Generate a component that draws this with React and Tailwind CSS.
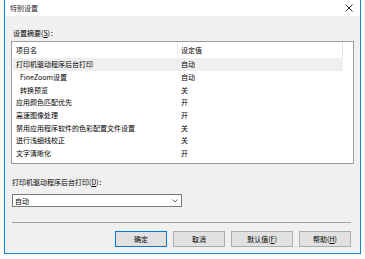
import React from "react";

const rows = [
  { name: "打印机驱动程序后台打印", value: "自动", indent: false, sel: true },
  { name: "FineZoom设置", value: "自动", indent: true },
  { name: "转换预览", value: "关", indent: true },
  { name: "应用颜色匹配优先", value: "开" },
  { name: "高速图像处理", value: "开" },
  { name: "禁用应用程序软件的色彩配置文件设置", value: "关" },
  { name: "进行浅细线校正", value: "关" },
  { name: "文字清晰化", value: "开" },
];

function Btn({ children, primary }) {
  return (
    <div
      className={
        "h-[16px] flex items-center justify-center bg-[#e1e1e1] border " +
        (primary ? "border-[#0078d7] w-[52px]" : "border-[#adadad]")
      }
    >
      {children}
    </div>
  );
}

export default function App() {
  return (
    <div
      className="w-[365px] h-[259px] bg-[#fbfbfb] text-[7px] leading-[10px] text-black overflow-hidden"
      style={{ fontFamily: '"Noto Sans CJK SC", "Noto Sans", sans-serif' }}
    >
      <div className="ml-[4px] w-[357px] h-[254px] border-x border-b border-[#1883d7] flex flex-col">
        <div className="h-[16px] bg-white flex items-center justify-between pl-[5px] pr-[6px] shrink-0">
          <span className="text-[#222]">特别设置</span>
          <svg width="8" height="8" viewBox="0 0 8 8" className="mr-[1px]">
            <path d="M0.5 0.5 L7.5 7.5 M7.5 0.5 L0.5 7.5" stroke="#111" strokeWidth="0.9" />
          </svg>
        </div>
        <div className="flex-1 bg-[#f0f0f0] px-[6px] flex flex-col">
          <div className="mt-[12px] h-[10px] ml-[2px]">
            设置摘要(<span className="underline">S</span>)：
          </div>
          <div className="mt-[3px] h-[123px] w-[343px] border border-[#9a9ca3] bg-white flex flex-col">
            <div className="h-[15px] flex shrink-0">
              <div className="w-[166px] h-full border-r border-[#e5e5e5] pl-[4px] flex items-center">项目名</div>
              <div className="w-[165px] h-full border-r border-[#e5e5e5] pl-[3px] flex items-center">设定值</div>
            </div>
            <div className="mt-[1px] flex flex-col">
              {rows.map((r, i) => (
                <div
                  key={i}
                  className={
                    "h-[12.7px] flex items-center ml-[1px] w-[330px] " + (r.sel ? "bg-[#efefef]" : "")
                  }
                >
                  <div className={"w-[165px] " + (r.indent ? "pl-[7px]" : "pl-[3px]")}>{r.name}</div>
                  <div className="pl-[3px]">{r.value}</div>
                </div>
              ))}
            </div>
          </div>
          <div className="mt-[13px] h-[10px] ml-[1px]">
            打印机驱动程序后台打印(<span className="underline">D</span>)：
          </div>
          <div className="mt-[7px] h-[13px] w-[170px] ml-[1px] border border-[#7a7a7a] bg-white flex items-center justify-between pl-[2px] pr-[3px]">
            <span>自动</span>
            <svg width="6" height="4" viewBox="0 0 6 4">
              <path d="M0.5 0.5 L3 3 L5.5 0.5" stroke="#444" strokeWidth="0.8" fill="none" />
            </svg>
          </div>
          <div className="mt-[15px] h-px w-[339px] ml-[1px] bg-[#a0a0a0]" />
          <div className="mt-[8px] flex justify-end gap-[6px] pr-[3px]">
            <Btn primary>确定</Btn>
            <div className="w-[52px]"><Btn>取消</Btn></div>
            <div className="w-[62px]"><Btn>默认值(<span className="underline">F</span>)</Btn></div>
            <div className="w-[52px]"><Btn>帮助(<span className="underline">H</span>)</Btn></div>
          </div>
        </div>
      </div>
    </div>
  );
}
